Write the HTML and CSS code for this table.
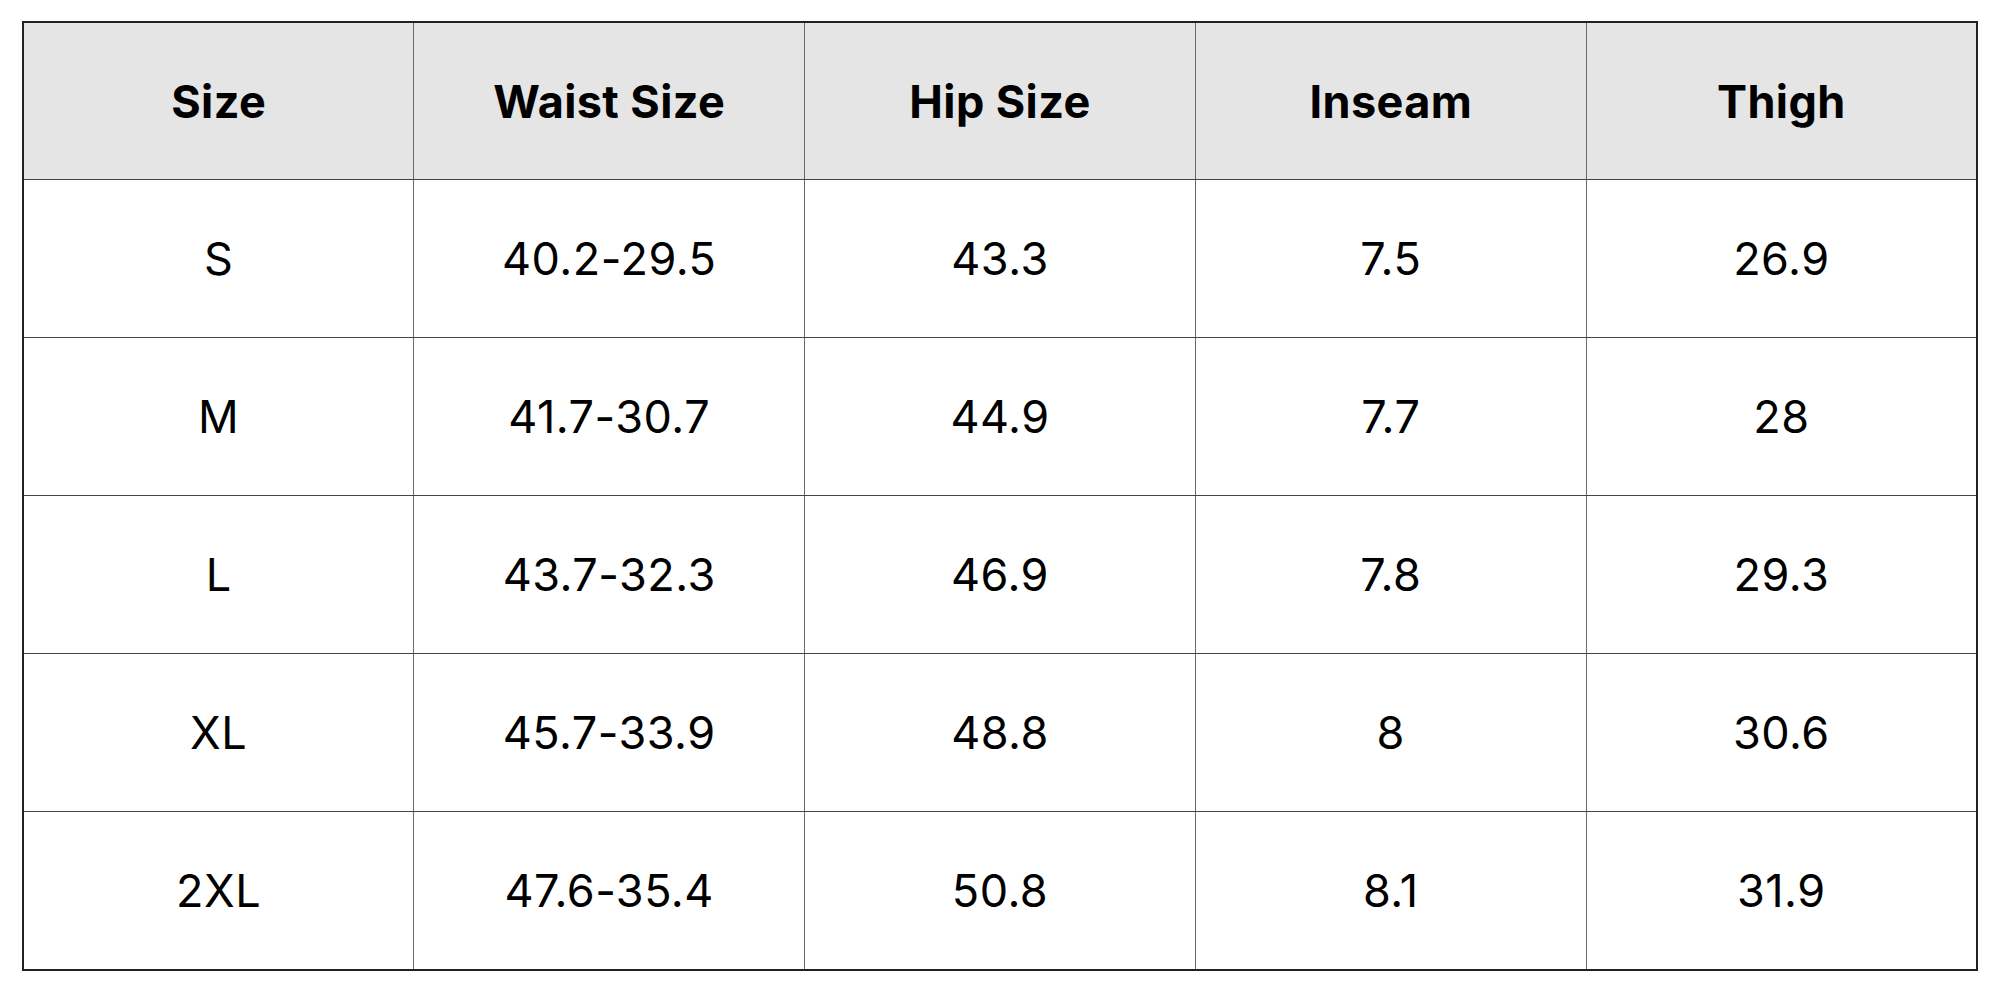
FILE: index.html
```html
<!DOCTYPE html>
<html>
<head>
<meta charset="utf-8">
<link rel="stylesheet" href="styles.css">
</head>
<body>
<div class="wrap">
<table class="chart">
<thead>
<tr><th>Size</th><th>Waist Size</th><th>Hip Size</th><th>Inseam</th><th>Thigh</th></tr>
</thead>
<tbody>
<tr><td>S</td><td>40.2-29.5</td><td>43.3</td><td>7.5</td><td>26.9</td></tr>
<tr><td>M</td><td>41.7-30.7</td><td>44.9</td><td>7.7</td><td>28</td></tr>
<tr><td>L</td><td>43.7-32.3</td><td>46.9</td><td>7.8</td><td>29.3</td></tr>
<tr><td>XL</td><td>45.7-33.9</td><td>48.8</td><td>8</td><td>30.6</td></tr>
<tr><td>2XL</td><td>47.6-35.4</td><td>50.8</td><td>8.1</td><td>31.9</td></tr>
</tbody>
</table>
</div>
</body>
</html>
```
FILE: styles.css
```css
html, body {
  margin: 0;
  padding: 0;
  background: #ffffff;
}
.wrap {
  padding: 21px 22px;
}
.chart {
  width: 1956px;
  border-collapse: collapse;
  table-layout: fixed;
  border: 2px solid #222;
  font-family: Inter, "Noto Sans", sans-serif;
  color: #000;
}
.chart th, .chart td {
  padding: 0;
  text-align: center;
  vertical-align: middle;
  border-left: 1.5px solid #6a6a6a;
  border-right: 1.5px solid #6a6a6a;
  border-top: 1.5px solid #444;
  border-bottom: 1.5px solid #444;
}
.chart th {
  height: 156px;
  background: #e5e5e5;
  font-weight: 700;
  font-size: 45px;
  letter-spacing: 0.4px;
}
.chart td {
  height: 157px;
  font-weight: 400;
  font-size: 45px;
  letter-spacing: 0.5px;
}
```
